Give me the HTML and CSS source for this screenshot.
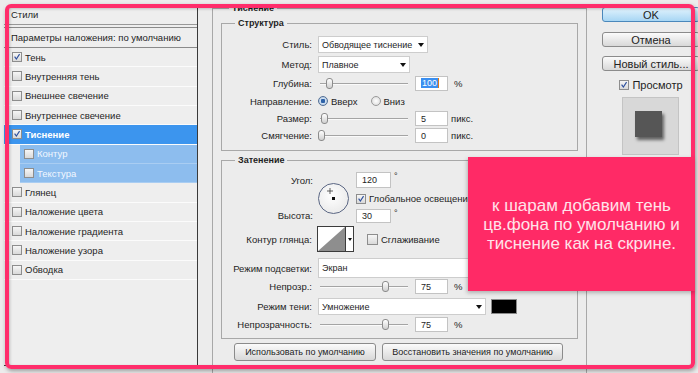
FILE: index.html
```html
<!DOCTYPE html>
<html>
<head>
<meta charset="utf-8">
<link rel="stylesheet" href="styles.css">
</head>
<body>
<div class="dialog">
    <div class="styles-panel">
        <div class="sp-head">Стили</div>
        <div class="sp-blend">Параметры наложения: по умолчанию</div>
        <div class="sp-item"><span class="cb"><svg viewBox="0 0 10 10"><path d="M2 4.6 L4.2 7.6 L8.2 1.4"/></svg></span>Тень</div>
        <div class="sp-item"><span class="cb"></span>Внутренняя тень</div>
        <div class="sp-item"><span class="cb"></span>Внешнее свечение</div>
        <div class="sp-item"><span class="cb"></span>Внутреннее свечение</div>
        <div class="sp-item active"><span class="cb"><svg viewBox="0 0 10 10"><path d="M2 4.6 L4.2 7.6 L8.2 1.4"/></svg></span>Тиснение</div>
        <div class="sp-item sub"><span class="cb"></span>Контур</div>
        <div class="sp-item sub"><span class="cb"></span>Текстура</div>
        <div class="sp-item"><span class="cb"></span>Глянец</div>
        <div class="sp-item"><span class="cb"></span>Наложение цвета</div>
        <div class="sp-item"><span class="cb"></span>Наложение градиента</div>
        <div class="sp-item"><span class="cb"></span>Наложение узора</div>
        <div class="sp-item"><span class="cb"></span>Обводка</div>
    </div>

    <div class="main">
        <fieldset class="group outer">
            <legend>Тиснение</legend>

            <fieldset class="group inner">
                <legend>Структура</legend>
                <div class="form structure">
                    <div class="row r1">
                        <span class="lbl">Стиль:</span>
                        <div class="select w-style"><span>Обводящее тиснение</span><i class="arrow"></i></div>
                    </div>
                    <div class="row r2">
                        <span class="lbl">Метод:</span>
                        <div class="select w-method"><span>Плавное</span><i class="arrow"></i></div>
                    </div>
                    <div class="row r3">
                        <span class="lbl">Глубина:</span>
                        <div class="slider"><i class="thumb" style="left:8px"></i></div>
                        <div class="field"><span class="hl">100</span><i class="caret"></i></div>
                        <span class="unit">%</span>
                    </div>
                    <div class="row r4">
                        <span class="lbl">Направление:</span>
                        <span class="radio on"></span><span class="rtext">Вверх</span>
                        <span class="radio second"></span><span class="rtext">Вниз</span>
                    </div>
                    <div class="row r5">
                        <span class="lbl">Размер:</span>
                        <div class="slider"><i class="thumb" style="left:3px"></i></div>
                        <div class="field">5</div>
                        <span class="unit px">пикс.</span>
                    </div>
                    <div class="row r6">
                        <span class="lbl">Смягчение:</span>
                        <div class="slider"><i class="thumb" style="left:0px"></i></div>
                        <div class="field">0</div>
                        <span class="unit px">пикс.</span>
                    </div>
                </div>
            </fieldset>

            <fieldset class="group inner shading">
                <legend>Затенение</legend>
                <div class="form">
                    <div class="angle">
                        <span class="lbl a-lbl1">Угол:</span>
                        <div class="dial">
                            <svg class="cross" viewBox="0 0 7 7"><path d="M3.5 0 V7 M0 3.5 H7"/></svg>
                            <i class="dot"></i>
                        </div>
                        <div class="a-in1"><div class="field wide">120</div><span class="deg">°</span></div>
                        <div class="a-chk"><span class="cb"><svg viewBox="0 0 10 10"><path d="M2 4.6 L4.2 7.6 L8.2 1.4"/></svg></span>Глобальное освещение</div>
                        <span class="lbl a-lbl3">Высота:</span>
                        <div class="a-in3"><div class="field wide short">30</div><span class="deg">°</span></div>
                    </div>
                    <div class="row gloss">
                        <span class="lbl">Контур глянца:</span>
                        <div class="contour">
                            <svg viewBox="0 0 28 24" preserveAspectRatio="none"><path d="M0 24 L28 0 L28 24 Z"/></svg>
                            <span class="c-drop"><i class="arrow"></i></span>
                        </div>
                        <span class="cb smooth"></span><span>Сглаживание</span>
                    </div>
                    <div class="row hl-mode">
                        <span class="lbl">Режим подсветки:</span>
                        <div class="select w-mode tall"><span>Экран</span><i class="arrow"></i></div>
                    </div>
                    <div class="row op1">
                        <span class="lbl">Непрозр.:</span>
                        <div class="slider"><i class="thumb" style="left:64px"></i></div>
                        <div class="field">75</div>
                        <span class="unit">%</span>
                    </div>
                    <div class="row sh-mode">
                        <span class="lbl">Режим тени:</span>
                        <div class="select w-mode"><span>Умножение</span><i class="arrow"></i></div>
                        <span class="swatch"></span>
                    </div>
                    <div class="row op2">
                        <span class="lbl">Непрозрачность:</span>
                        <div class="slider"><i class="thumb" style="left:64px"></i></div>
                        <div class="field">75</div>
                        <span class="unit">%</span>
                    </div>
                </div>
            </fieldset>

            <div class="defaults">
                <span class="btn small b-use">Использовать по умолчанию</span>
                <span class="btn small b-reset">Восстановить значения по умолчанию</span>
            </div>
        </fieldset>
    </div>

    <div class="side">
        <span class="btn ok">OK</span>
        <span class="btn cancel">Отмена</span>
        <span class="btn newstyle">Новый стиль...</span>
        <div class="preview-toggle"><span class="cb"><svg viewBox="0 0 10 10"><path d="M2 4.6 L4.2 7.6 L8.2 1.4"/></svg></span>Просмотр</div>
        <div class="preview"><i class="swatch-prev"></i></div>
    </div>
</div>

<div class="frame"></div>
<div class="note">к шарам добавим тень<br>цв.фона по умолчанию и<br>тиснение как на скрине.</div>
</body>
</html>
```

FILE: styles.css
```css
body {margin:0; width:698px; height:373px; overflow:hidden; position:relative; background:#e6e6e6; font:9.5px "Liberation Sans", Arial, sans-serif; color:#1e1e1e;}
.dialog {display:flex; height:373px; overflow:hidden; background:#ececec;}

/* left list of styles */
.styles-panel {flex:none; width:193px; height:360px; margin:5px 0 0 4px; border-right:1px solid #3a3a3a; border-bottom:1px solid #3a3a3a; background:#eeeeee;}
.sp-head {height:19px; border-bottom:1px solid #989898; padding-left:7px; display:flex; align-items:center;}
.sp-blend {height:19px; margin-top:2px; border-top:1px solid #8a8a8a; border-bottom:1px solid #8a8a8a; padding-left:7px; display:flex; align-items:center;}
.sp-item {height:19.33px; box-sizing:border-box; border-bottom:1px solid #fbfbfb; padding-left:8px; display:flex; align-items:center;}
.sp-item.active {background:#3c95ee; color:#fff; font-weight:bold;}
.sp-item.sub {margin-left:16px; padding-left:4px; background:#8dbdee; color:#f2f7ff; border-bottom-color:#a9cdf2;}

.cb {flex:none; width:10px; height:10px; box-sizing:border-box; border:1px solid #8d8d8d; background:linear-gradient(#f6f6f6,#d9d9d9); margin-right:3px; display:inline-flex;}
.cb svg {width:8px; height:8px;}
.cb path {fill:none; stroke:#2c4f9e; stroke-width:1.4;}

/* main area */
.main {flex:none; margin:2px 0 0 14px;}
.group {margin:0; padding:0; border:1px solid #a8a8a8; min-inline-size:auto;}
.group legend {font-weight:bold; font-size:9px; line-height:12px; padding:0 3px; margin-left:8px;}
.outer {width:375px; height:380px; box-sizing:border-box; padding:0 8px;}
.inner {margin-top:3px;}
.inner legend {margin-left:13px;}

.form {padding:5px 0 6px;}
.row {display:flex; align-items:center;}
.lbl {flex:none; width:90px; margin-right:6px; text-align:right;}
.r1 {height:21px;}
.r2 {height:19px;}
.r3, .r4 {height:18px;}
.r5, .r6 {height:17px;}

.select {flex:none; height:17px; box-sizing:border-box; border:1px solid #cdcdcd; background:#fff; padding:0 3px 0 3px; display:flex; align-items:center; justify-content:space-between; font-size:9px;}
.select.tall {height:20px;}
.w-style {width:110px;}
.w-method {width:92px;}
.w-mode {width:168px;}
.arrow {display:block; width:0; height:0; border-left:3.5px solid transparent; border-right:3.5px solid transparent; border-top:4px solid #111;}

.slider {flex:none; position:relative; width:90px; height:11px;}
.slider::before {content:""; position:absolute; left:2px; right:0; top:5px; height:1px; background:#a4a4a4; box-shadow:0 1px 0 #fafafa;}
.thumb {position:absolute; top:0; width:7px; height:11px; box-sizing:border-box; border:1px solid #8c8c8c; border-radius:3px; background:linear-gradient(#ffffff,#cfcfcf);}

.field {flex:none; width:33px; height:15px; box-sizing:border-box; margin-left:7px; padding-left:5px; border:1px solid #c3c3c3; background:#fff; display:flex; align-items:center; font-size:9px;}
.field .hl {background:#3b8ff0; color:#fff; padding:0 1px;}
.field .caret {width:1px; height:10px; background:#e07a18;}
.unit {margin-left:6px;}
.unit.px {margin-left:3px;}

.radio {flex:none; width:10px; height:10px; box-sizing:border-box; border-radius:50%; border:1px solid #9a9a9a; background:radial-gradient(#ffffff,#d6d6d6);}
.radio.on {border-color:#536f95; background:radial-gradient(circle, #2e62a8 0 2px, #cfe0f2 2.5px, #9fb7d4 100%);}
.radio.second {margin-left:13px;}
.rtext {margin-left:3px;}

/* shading */
.angle {display:grid; grid-template-columns:96px 38px 1fr; grid-template-rows:18px 19px 15px; align-items:center;}
.a-lbl1 {grid-column:1; grid-row:1;}
.a-lbl3 {grid-column:1; grid-row:3;}
.angle .lbl {width:91px; margin-right:5px;}
.dial {grid-column:2; grid-row:1 / 4; position:relative; width:31px; height:31px; box-sizing:border-box; margin-top:3px; border:1.5px solid #5b6784; border-radius:50%; background:radial-gradient(circle at 45% 40%, #ffffff, #e4e4e4);}
.cross {position:absolute; left:8px; top:4px; width:6px; height:6px;}
.cross path {stroke:#444; stroke-width:1; fill:none;}
.dot {position:absolute; left:13px; top:13px; width:3px; height:3px; background:#111;}
.a-in1 {grid-column:3; grid-row:1; display:flex; align-items:flex-start;}
.a-chk {grid-column:3; grid-row:2; display:flex; align-items:center;}
.a-in3 {grid-column:3; grid-row:3; display:flex; align-items:flex-start;}
.field.wide {width:35px; height:16px; margin-left:0;}
.field.short {height:14px;}
.deg {margin-left:3px; font-size:9px; line-height:8px;}

.gloss {height:26px; margin-top:3px;}
.contour {flex:none; width:37px; height:26px; box-sizing:border-box; margin-left:-1px; border:1px solid #3c3c3c; background:#fff; display:flex;}
.contour svg {width:27px; height:24px;}
.contour path {fill:#8e8e8e;}
.c-drop {flex:1; border-left:1px solid #3c3c3c; display:flex; align-items:center; justify-content:center;}
.c-drop .arrow {border-left-width:2.5px; border-right-width:2.5px; border-top-width:3px;}
.cb.smooth {margin-left:13px; width:11px; height:11px;}

.hl-mode {height:20px; margin-top:6px;}
.op1 {height:15px; margin-top:1px;}
.sh-mode {height:17px; margin-top:4px;}
.op2 {height:15px; margin-top:2px;}
.swatch {flex:none; width:26px; height:15px; box-sizing:border-box; margin-left:5px; border:1px solid #8a8a8a; background:#000;}

.defaults {display:flex; gap:6px; margin:4px 0 0 13px;}
.btn {flex:none; box-sizing:border-box; border:1px solid #8b8b8b; border-radius:3px; background:linear-gradient(#fbfbfb,#d8d8d8); display:flex; align-items:center; justify-content:center; color:#222;}
.btn.small {height:18px; font-size:9px;}
.b-use {width:142px;}
.b-reset {width:181px;}

/* right column */
.side {flex:1; padding:7px 0 0 15px; display:flex; flex-direction:column; align-items:flex-start;}
.side .btn {width:98px; height:15px; font-size:11px;}
.side .btn.ok {background:linear-gradient(#e2f3fd,#a7d6f4); border-color:#4b88bb;}
.side .cancel {margin-top:10px;}
.side .newstyle {margin-top:9px;}
.preview-toggle {width:98px; height:11px; margin-top:8px; display:flex; align-items:center; justify-content:center; font-size:11px;}
.preview {width:57px; height:58px; box-sizing:border-box; margin:7px 0 0 20px; border:1px solid #c4c4c4; background:#d8d8d8; display:flex; align-items:center; justify-content:center;}
.swatch-prev {width:27px; height:26px; margin:-4px 0 0 -4px; background:#565656; box-shadow:2px 3px 3px rgba(0,0,0,.55);}

/* annotation overlays */
.frame {position:absolute; left:5px; top:4px; width:690px; height:365px; box-sizing:border-box; border:4px solid #ff2d6b; border-radius:6px; box-shadow:1px 2px 4px rgba(0,0,0,.35), inset 1px 1px 3px rgba(0,0,0,.2);}
.note {position:absolute; left:468px; top:157px; width:227px; height:134px; background:#ff2a66; color:#ffe3ea; font:17px/19px "Liberation Sans", Arial, sans-serif; text-align:center; display:flex; align-items:center; justify-content:center; box-shadow:-1px 2px 4px rgba(0,0,0,.25);}
```
